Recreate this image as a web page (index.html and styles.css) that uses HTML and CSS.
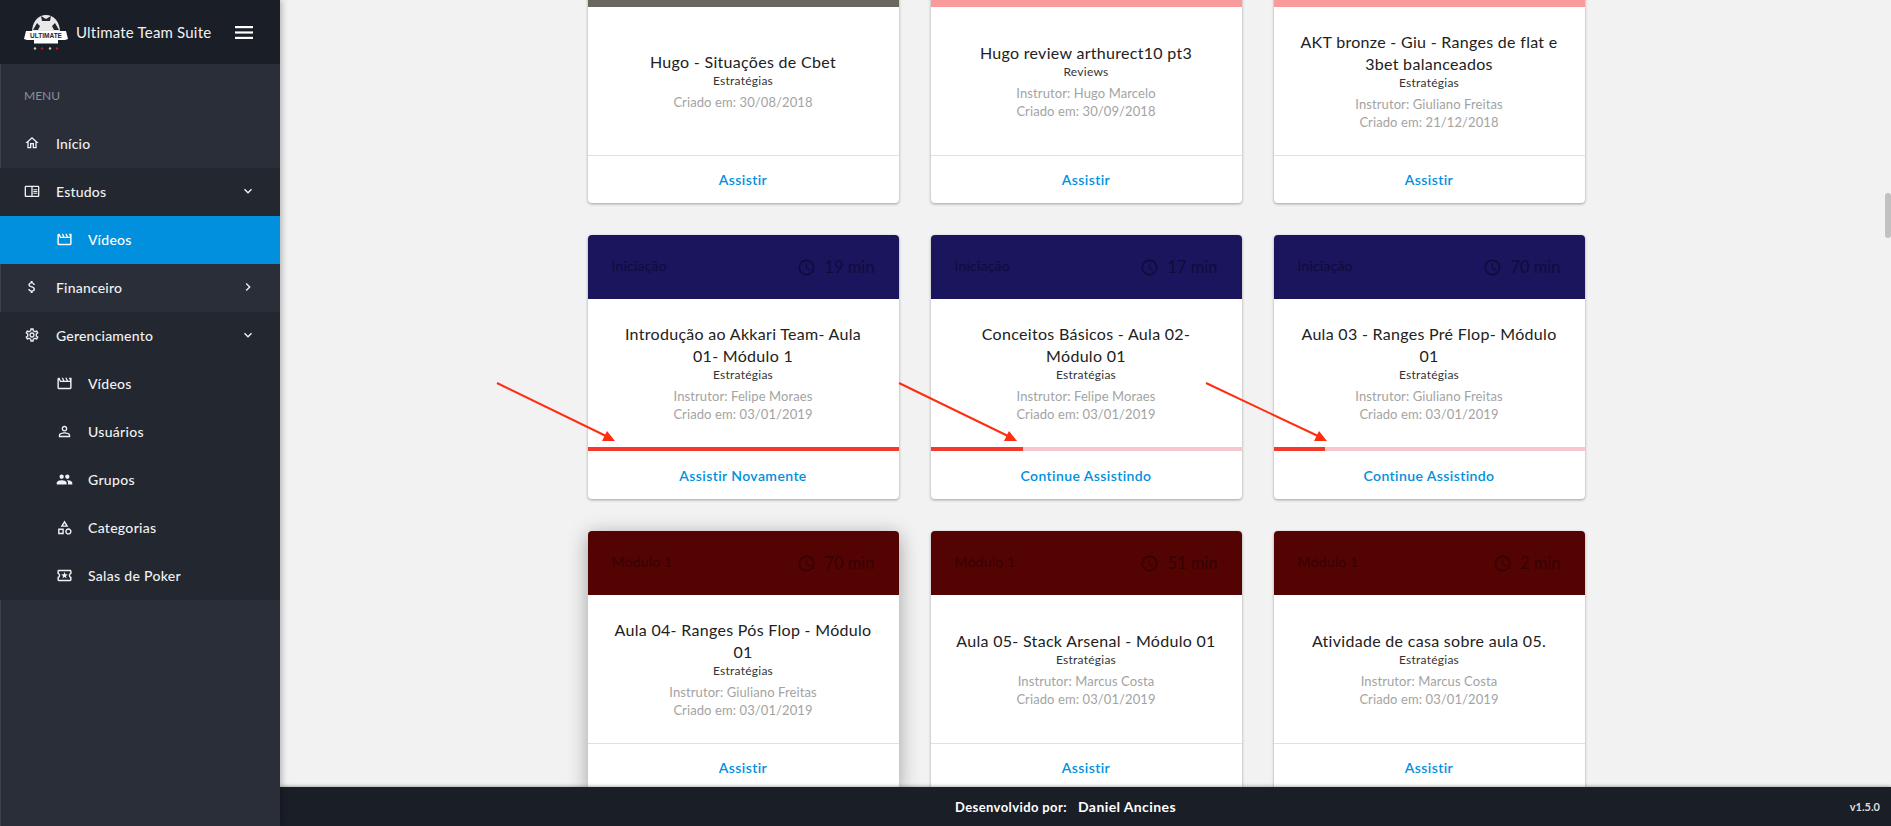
FILE: index.html
```html
<!DOCTYPE html>
<html lang="en">
<head>
  <meta charset="UTF-8">
  <title>Ultimate Team Suite</title>
  <link rel="stylesheet" href="styles.css">
</head>
<body>

  <svg class="sprite" xmlns="http://www.w3.org/2000/svg">
    <symbol id="i-home" viewBox="0 0 24 24"><path d="M12 5.69l5 4.5V18h-2v-6H9v6H7v-7.81l5-4.5M12 3L2 12h3v8h6v-6h2v6h6v-8h3L12 3z"/></symbol>
    <symbol id="i-reader" viewBox="0 0 24 24"><path d="M21 4H3c-1.1 0-2 .9-2 2v13c0 1.1.9 2 2 2h18c1.1 0 2-.9 2-2V6c0-1.1-.9-2-2-2zM3 19V6h8v13H3zm18 0h-8V6h8v13zm-7-9.5h6V11h-6zm0 2.5h6v1.5h-6zm0 2.5h6V16h-6z"/></symbol>
    <symbol id="i-movie" viewBox="0 0 24 24"><path d="M4 6.47L5.76 10H20v8H4V6.47M22 4h-4l2 4h-3l-2-4h-2l2 4h-3l-2-4H8l2 4H7L5 4H4c-1.1 0-1.99.9-1.99 2L2 18c0 1.1.9 2 2 2h16c1.1 0 2-.9 2-2V4z"/></symbol>
    <symbol id="i-money" viewBox="0 0 24 24"><path d="M11.8 10.9c-2.27-.59-3-1.2-3-2.15 0-1.09 1.01-1.85 2.7-1.85 1.78 0 2.44.85 2.5 2.1h2.21c-.07-1.72-1.12-3.3-3.21-3.81V3h-3v2.16c-1.94.42-3.5 1.68-3.5 3.61 0 2.31 1.91 3.46 4.7 4.13 2.5.6 3 1.48 3 2.41 0 .69-.49 1.79-2.7 1.79-2.06 0-2.87-.92-2.98-2.1h-2.2c.12 2.19 1.76 3.42 3.68 3.83V21h3v-2.15c1.95-.37 3.5-1.5 3.5-3.55 0-2.84-2.43-3.81-4.7-4.4z"/></symbol>
    <symbol id="i-settings" viewBox="0 0 24 24"><path d="M19.43 12.98c.04-.32.07-.64.07-.98 0-.34-.03-.66-.07-.98l2.11-1.65c.19-.15.24-.42.12-.64l-2-3.46c-.09-.16-.26-.25-.44-.25-.06 0-.12.01-.17.03l-2.49 1c-.52-.4-1.08-.73-1.69-.98l-.38-2.65C14.46 2.18 14.25 2 14 2h-4c-.25 0-.46.18-.49.42l-.38 2.65c-.61.25-1.17.59-1.69.98l-2.49-1c-.06-.02-.12-.03-.18-.03-.17 0-.34.09-.43.25l-2 3.46c-.13.22-.07.49.12.64l2.11 1.65c-.04.32-.07.65-.07.98 0 .33.03.66.07.98l-2.11 1.65c-.19.15-.24.42-.12.64l2 3.46c.09.16.26.25.44.25.06 0 .12-.01.17-.03l2.49-1c.52.4 1.08.73 1.69.98l.38 2.65c.03.24.24.42.49.42h4c.25 0 .46-.18.49-.42l.38-2.65c.61-.25 1.17-.59 1.69-.98l2.49 1c.06.02.12.03.18.03.17 0 .34-.09.43-.25l2-3.46c.12-.22.07-.49-.12-.64l-2.11-1.65zm-1.98-1.71c.04.31.05.52.05.73 0 .21-.02.43-.05.73l-.14 1.13.89.7 1.08.84-.7 1.21-1.27-.51-1.04-.42-.9.68c-.43.32-.84.56-1.25.73l-1.06.43-.16 1.13-.2 1.35h-1.4l-.19-1.35-.16-1.13-1.06-.43c-.43-.18-.83-.41-1.23-.71l-.91-.7-1.06.43-1.27.51-.7-1.21 1.08-.84.89-.7-.14-1.13c-.03-.31-.05-.54-.05-.74s.02-.43.05-.73l.14-1.13-.89-.7-1.08-.84.7-1.21 1.27.51 1.04.42.9-.68c.43-.32.84-.56 1.25-.73l1.06-.43.16-1.13.2-1.35h1.39l.19 1.35.16 1.13 1.06.43c.43.18.83.41 1.23.71l.91.7 1.06-.43 1.27-.51.7 1.21-1.07.85-.89.7.14 1.13zM12 8c-2.21 0-4 1.79-4 4s1.79 4 4 4 4-1.79 4-4-1.79-4-4-4zm0 6c-1.1 0-2-.9-2-2s.9-2 2-2 2 .9 2 2-.9 2-2 2z"/></symbol>
    <symbol id="i-person" viewBox="0 0 24 24"><path d="M12 5.9c1.16 0 2.1.94 2.1 2.1s-.94 2.1-2.1 2.1S9.9 9.16 9.9 8s.94-2.1 2.1-2.1m0 9c2.97 0 6.1 1.46 6.1 2.1v1.1H5.9V17c0-.64 3.13-2.1 6.1-2.1M12 4C9.79 4 8 5.79 8 8s1.79 4 4 4 4-1.79 4-4-1.79-4-4-4zm0 9c-2.67 0-8 1.34-8 4v3h16v-3c0-2.66-5.33-4-8-4z"/></symbol>
    <symbol id="i-people" viewBox="0 0 24 24"><path d="M16 11c1.66 0 2.99-1.34 2.99-3S17.66 5 16 5c-1.66 0-3 1.34-3 3s1.34 3 3 3zm-8 0c1.66 0 2.99-1.34 2.99-3S9.66 5 8 5C6.34 5 5 6.34 5 8s1.34 3 3 3zm0 2c-2.33 0-7 1.17-7 3.5V19h14v-2.5c0-2.33-4.67-3.5-7-3.5zm8 0c-.29 0-.62.02-.97.05 1.16.84 1.97 1.97 1.97 3.45V19h6v-2.5c0-2.33-4.67-3.5-7-3.5z"/></symbol>
    <symbol id="i-category" viewBox="0 0 24 24"><path d="M12 2l-5.5 9h11L12 2zm0 3.84L13.93 9h-3.87L12 5.84zM17.5 13c-2.49 0-4.5 2.01-4.5 4.5s2.01 4.5 4.5 4.5 4.5-2.01 4.5-4.5-2.01-4.5-4.5-4.5zm0 7c-1.38 0-2.5-1.12-2.5-2.5s1.12-2.5 2.5-2.5 2.5 1.12 2.5 2.5-1.12 2.5-2.5 2.5zM3 21.5h8v-8H3v8zm2-6h4v4H5v-4z"/></symbol>
    <symbol id="i-ticket" viewBox="0 0 24 24"><path d="M22 10V6c0-1.11-.9-2-2-2H4c-1.1 0-1.99.89-1.99 2v4c1.1 0 1.99.9 1.99 2s-.89 2-2 2v4c0 1.1.9 2 2 2h16c1.1 0 2-.9 2-2v-4c-1.1 0-2-.9-2-2s.9-2 2-2zm-2-1.46c-1.19.69-2 1.99-2 3.46s.81 2.77 2 3.46V18H4v-2.54c1.19-.69 2-1.99 2-3.46 0-1.48-.8-2.77-1.99-3.46L4 6h16v2.54zM9.07 16L12 14.12 14.93 16l-.89-3.36 2.69-2.2-3.47-.21L12 7l-1.27 3.22-3.47.21 2.69 2.2z"/></symbol>
    <symbol id="i-clock" viewBox="0 0 24 24"><path d="M11.99 2C6.47 2 2 6.48 2 12s4.47 10 9.99 10C17.52 22 22 17.52 22 12S17.52 2 11.99 2zM12 20c-4.42 0-8-3.58-8-8s3.58-8 8-8 8 3.58 8 8-3.58 8-8 8zm.5-13H11v6l5.25 3.15.75-1.23-4.5-2.67z"/></symbol>
    <symbol id="i-down" viewBox="0 0 24 24"><path d="M7.41 8.59L12 13.17l4.59-4.58L18 10l-6 6-6-6z"/></symbol>
    <symbol id="i-right" viewBox="0 0 24 24"><path d="M8.59 16.59L13.17 12 8.59 7.41 10 6l6 6-6 6z"/></symbol>
  </svg>

  <aside class="sidebar">
    <div class="brand">
      <svg class="logo" viewBox="0 0 44 36" xmlns="http://www.w3.org/2000/svg">
        <path d="M8 17C8 7 14 0 22 0s14 7 14 17z" fill="#e8e8e8"/>
        <path d="M17 1l5 3 5-3-1 5h-8zM9 15l4-7 3 3-2 4zM35 15l-4-7-3 3 2 4z" fill="#23262e"/>
        <path d="M2 16h40l2 8-3 1H3l-3-1z" fill="#fff"/>
        <text class="logo-word" x="22" y="22.5" text-anchor="middle">ULTIMATE</text>
        <rect x="10" y="25" width="24" height="3.5" fill="#fff"/>
        <circle cx="11" cy="33.5" r="1.2" fill="#ccc"/>
        <circle cx="18" cy="33.5" r="1.2" fill="#c3111f"/>
        <circle cx="26" cy="33.5" r="1.2" fill="#ccc"/>
        <circle cx="33" cy="33.5" r="1.2" fill="#c3111f"/>
      </svg>
      <span class="brand-name">Ultimate Team Suite</span>
      <svg class="burger" viewBox="0 0 18 13" xmlns="http://www.w3.org/2000/svg">
        <rect y="0" width="18" height="2.2" fill="#fff"/>
        <rect y="5.4" width="18" height="2.2" fill="#fff"/>
        <rect y="10.8" width="18" height="2.2" fill="#fff"/>
      </svg>
    </div>

    <div class="menu-label">MENU</div>

    <nav class="menu">
      <a class="item"><svg class="icon"><use href="#i-home"/></svg>Início</a>

      <div class="group">
        <a class="item"><svg class="icon"><use href="#i-reader"/></svg>Estudos<svg class="icon chevron"><use href="#i-down"/></svg></a>
        <a class="item sub active"><svg class="icon"><use href="#i-movie"/></svg>Vídeos</a>
      </div>

      <a class="item"><svg class="icon"><use href="#i-money"/></svg>Financeiro<svg class="icon chevron"><use href="#i-right"/></svg></a>

      <div class="group">
        <a class="item"><svg class="icon"><use href="#i-settings"/></svg>Gerenciamento<svg class="icon chevron"><use href="#i-down"/></svg></a>
        <a class="item sub"><svg class="icon"><use href="#i-movie"/></svg>Vídeos</a>
        <a class="item sub"><svg class="icon"><use href="#i-person"/></svg>Usuários</a>
        <a class="item sub"><svg class="icon"><use href="#i-people"/></svg>Grupos</a>
        <a class="item sub"><svg class="icon"><use href="#i-category"/></svg>Categorias</a>
        <a class="item sub"><svg class="icon"><use href="#i-ticket"/></svg>Salas de Poker</a>
      </div>
    </nav>
  </aside>

  <div class="content">
    <main class="main">
      <div class="cards">

        <div class="card">
          <div class="card-top gray"></div>
          <div class="card-body">
            <div class="card-title">Hugo - Situações de Cbet</div>
            <div class="card-cat">Estratégias</div>
            <div class="card-meta">Criado em: 30/08/2018</div>
          </div>
          <div class="card-action">Assistir</div>
        </div>

        <div class="card">
          <div class="card-top pink"></div>
          <div class="card-body">
            <div class="card-title">Hugo review arthurect10 pt3</div>
            <div class="card-cat">Reviews</div>
            <div class="card-meta">Instrutor: Hugo Marcelo<br>Criado em: 30/09/2018</div>
          </div>
          <div class="card-action">Assistir</div>
        </div>

        <div class="card">
          <div class="card-top pink"></div>
          <div class="card-body">
            <div class="card-title">AKT bronze - Giu - Ranges de flat e 3bet balanceados</div>
            <div class="card-cat">Estratégias</div>
            <div class="card-meta">Instrutor: Giuliano Freitas<br>Criado em: 21/12/2018</div>
          </div>
          <div class="card-action">Assistir</div>
        </div>

        <div class="card">
          <div class="card-top navy">
            <span class="track">Iniciação</span>
            <span class="duration"><svg class="clock"><use href="#i-clock"/></svg>19 min</span>
          </div>
          <div class="card-body">
            <div class="card-title">Introdução ao Akkari Team- Aula 01- Módulo 1</div>
            <div class="card-cat">Estratégias</div>
            <div class="card-meta">Instrutor: Felipe Moraes<br>Criado em: 03/01/2019</div>
          </div>
          <div class="progress"><div class="progress-fill" style="width: 100%"></div></div>
          <div class="card-action no-line">Assistir Novamente</div>
        </div>

        <div class="card">
          <div class="card-top navy">
            <span class="track">Iniciação</span>
            <span class="duration"><svg class="clock"><use href="#i-clock"/></svg>17 min</span>
          </div>
          <div class="card-body">
            <div class="card-title">Conceitos Básicos - Aula 02- Módulo 01</div>
            <div class="card-cat">Estratégias</div>
            <div class="card-meta">Instrutor: Felipe Moraes<br>Criado em: 03/01/2019</div>
          </div>
          <div class="progress"><div class="progress-fill" style="width: 29.6%"></div></div>
          <div class="card-action no-line">Continue Assistindo</div>
        </div>

        <div class="card">
          <div class="card-top navy">
            <span class="track">Iniciação</span>
            <span class="duration"><svg class="clock"><use href="#i-clock"/></svg>70 min</span>
          </div>
          <div class="card-body">
            <div class="card-title">Aula 03 - Ranges Pré Flop- Módulo 01</div>
            <div class="card-cat">Estratégias</div>
            <div class="card-meta">Instrutor: Giuliano Freitas<br>Criado em: 03/01/2019</div>
          </div>
          <div class="progress"><div class="progress-fill" style="width: 16.7%"></div></div>
          <div class="card-action no-line">Continue Assistindo</div>
        </div>

        <div class="card hovered">
          <div class="card-top maroon">
            <span class="track">Módulo 1</span>
            <span class="duration"><svg class="clock"><use href="#i-clock"/></svg>70 min</span>
          </div>
          <div class="card-body">
            <div class="card-title">Aula 04- Ranges Pós Flop - Módulo 01</div>
            <div class="card-cat">Estratégias</div>
            <div class="card-meta">Instrutor: Giuliano Freitas<br>Criado em: 03/01/2019</div>
          </div>
          <div class="card-action">Assistir</div>
        </div>

        <div class="card">
          <div class="card-top maroon">
            <span class="track">Módulo 1</span>
            <span class="duration"><svg class="clock"><use href="#i-clock"/></svg>51 min</span>
          </div>
          <div class="card-body">
            <div class="card-title">Aula 05- Stack Arsenal - Módulo 01</div>
            <div class="card-cat">Estratégias</div>
            <div class="card-meta">Instrutor: Marcus Costa<br>Criado em: 03/01/2019</div>
          </div>
          <div class="card-action">Assistir</div>
        </div>

        <div class="card">
          <div class="card-top maroon">
            <span class="track">Módulo 1</span>
            <span class="duration"><svg class="clock"><use href="#i-clock"/></svg>2 min</span>
          </div>
          <div class="card-body">
            <div class="card-title">Atividade de casa sobre aula 05.</div>
            <div class="card-cat">Estratégias</div>
            <div class="card-meta">Instrutor: Marcus Costa<br>Criado em: 03/01/2019</div>
          </div>
          <div class="card-action">Assistir</div>
        </div>

      </div>
    </main>

    <footer class="footer">
      <span class="footer-credit">Desenvolvido por:<span class="footer-name">Daniel Ancines</span></span>
      <span class="version">v1.5.0</span>
    </footer>
  </div>

  <!-- annotation arrows drawn over the cards -->
  <svg class="arrows" viewBox="0 0 1891 826" xmlns="http://www.w3.org/2000/svg">
    <g stroke="#ff2d12" stroke-width="2" fill="#ff2d12">
      <line x1="497" y1="383" x2="606" y2="436"/>
      <polygon points="615,441 602,441 607,431" stroke="none"/>
      <line x1="899" y1="383" x2="1008" y2="436"/>
      <polygon points="1017,441 1004,441 1009,431" stroke="none"/>
      <line x1="1206" y1="383" x2="1318" y2="436"/>
      <polygon points="1327,441 1314,441 1319,431" stroke="none"/>
    </g>
  </svg>

  <div class="scroll-thumb"></div>

</body>
</html>
```

FILE: styles.css
```css
* {
  box-sizing: border-box;
}
body {
  font-family: Lato, "Noto Sans", sans-serif;
  margin: 0;
  height: 100vh;
  overflow: hidden;
  display: flex;
  background-color: #f2f2f2;
  color: #212121;
}
.sprite {
  position: absolute;
  width: 0;
  height: 0;
}

/* sidebar */
.sidebar {
  width: 280px;
  flex-shrink: 0;
  background-color: #2a2e39;
  border-left: 1px solid #3c404b;
  box-shadow: 2px 0 6px rgba(0, 0, 0, 0.25);
  position: relative;
  z-index: 2;
  color: #fff;
}
.brand {
  height: 64px;
  margin-left: -1px;
  padding-left: 24px;
  display: flex;
  align-items: center;
  background-color: #1a1e27;
}
.logo {
  width: 44px;
  height: 36px;
  margin-top: 1px;
}
.logo-word {
  font-family: "Liberation Sans", sans-serif;
  font-size: 6.5px;
  font-weight: bold;
  fill: #23262e;
}
.brand-name {
  margin-left: 8px;
  font-size: 15px;
  letter-spacing: 0.2px;
  color: #f1f1f1;
}
.burger {
  width: 18px;
  height: 13px;
  margin-left: auto;
  margin-right: 27px;
}
.menu-label {
  height: 56px;
  margin-left: -1px;
  padding: 25px 0 0 24px;
  font-size: 12px;
  line-height: 14px;
  color: #8d9098;
}
.menu {
  margin-left: -1px;
}
.item {
  height: 48px;
  padding: 0 24px 2px;
  display: flex;
  align-items: center;
  font-size: 14px;
  font-weight: 500;
  letter-spacing: 0.2px;
  color: #f1f1f1;
}
.item.sub {
  padding-left: 56px;
  letter-spacing: 0.3px;
}
.item.active {
  background-color: #0090dd;
  color: #fff;
}
.group {
  background-color: #232730;
}
.icon {
  width: 16px;
  height: 16px;
  margin-right: 16px;
  fill: currentColor;
  flex-shrink: 0;
}
.item.sub .icon {
  width: 17px;
  height: 17px;
  margin-right: 15px;
}
.chevron {
  margin-left: auto;
  margin-right: 0;
}

/* main area */
.content {
  flex: 1;
  min-width: 0;
  display: flex;
  flex-direction: column;
}
.main {
  flex: 1;
  min-height: 0;
  overflow: hidden;
}
.cards {
  margin-top: -57px;
  display: grid;
  grid-template-columns: repeat(3, 311px);
  justify-content: center;
  gap: 32px;
  padding-left: 1px;
}
.card {
  background-color: #fff;
  border-radius: 4px;
  box-shadow: 0 1px 3px rgba(0, 0, 0, 0.35);
  overflow: hidden;
  display: flex;
  flex-direction: column;
}
.card.hovered {
  box-shadow: 0 4px 20px rgba(0, 0, 0, 0.35);
}
.card-top {
  height: 64px;
  padding: 0 24px;
  display: flex;
  align-items: center;
  justify-content: space-between;
  font-size: 14px;
}
.card-top.gray {
  background-color: #6b675e;
}
.card-top.pink {
  background-color: #f99b9b;
}
.card-top.navy {
  background-color: #1a155d;
  color: #0f0c3c;
}
.card-top.maroon {
  background-color: #540303;
  color: #350202;
}
.track {
  margin-bottom: 3px;
  letter-spacing: 0.2px;
}
.duration {
  display: flex;
  align-items: center;
  font-size: 16.5px;
}
.clock {
  width: 19px;
  height: 19px;
  margin-right: 8px;
  fill: currentColor;
}
.card-body {
  height: 148px;
  padding: 0 24px;
  display: flex;
  flex-direction: column;
  justify-content: center;
  text-align: center;
}
.card-title {
  font-size: 16px;
  line-height: 22px;
  letter-spacing: 0.3px;
  color: #212121;
}
.card-cat {
  font-size: 12px;
  line-height: 16px;
  letter-spacing: 0.25px;
  margin-bottom: 4px;
  color: #333;
}
.card-meta {
  font-size: 13px;
  line-height: 18px;
  letter-spacing: 0.1px;
  color: #a3a3a3;
}
.card-action {
  height: 48px;
  border-top: 1px solid #e0e0e0;
  display: flex;
  align-items: center;
  justify-content: center;
  font-size: 14px;
  font-weight: 600;
  letter-spacing: 0.4px;
  color: #0090dd;
}
.card-action.no-line {
  border-top: 0;
}
.progress {
  height: 4px;
  background-color: #f8c6cf;
}
.progress-fill {
  height: 100%;
  background-color: #f4392c;
}

/* footer */
.footer {
  height: 39px;
  flex-shrink: 0;
  padding: 0 11px 0 0;
  display: grid;
  grid-template-columns: 1fr auto 1fr;
  align-items: center;
  background-color: #1a1e27;
  box-shadow: 0 -1px 3px rgba(0, 0, 0, 0.3);
  color: #fff;
  position: relative;
}
.footer-credit {
  grid-column: 2;
  margin-right: 29px;
  font-size: 13px;
  font-weight: 700;
  letter-spacing: 0.4px;
}
.footer-name {
  margin-left: 11px;
  font-size: 14px;
}
.version {
  grid-column: 3;
  justify-self: end;
  font-size: 11px;
  font-weight: 700;
  color: #ddd;
}

/* overlays */
.arrows {
  position: absolute;
  top: 0;
  left: 0;
  width: 1891px;
  height: 826px;
  z-index: 3;
  pointer-events: none;
}
.scroll-thumb {
  position: absolute;
  top: 193px;
  right: 0;
  width: 6px;
  height: 45px;
  border-radius: 3px;
  background-color: #c1c1c1;
}
```
